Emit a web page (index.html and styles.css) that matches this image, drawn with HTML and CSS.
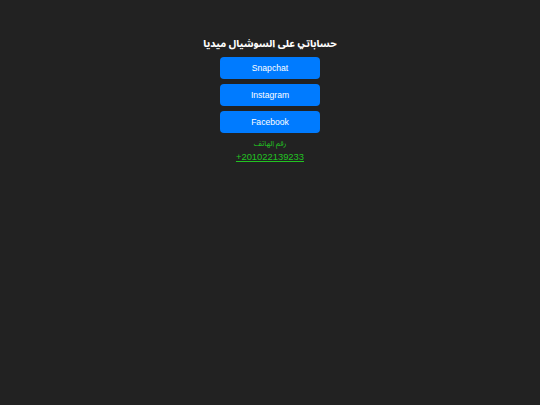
FILE: index.html
```html
<!DOCTYPE html>
<html lang="ar">
<head>
<meta charset="utf-8">
<link rel="stylesheet" href="styles.css">
</head>
<body>
<div class="page">
  <h1 class="title" dir="rtl">حساباتي على السوشيال ميديا</h1>
  <div class="links">
    <a class="btn" href="#">Snapchat</a>
    <a class="btn" href="#">Instagram</a>
    <a class="btn" href="#">Facebook</a>
  </div>
  <div class="phone">
    <div class="phone-label" dir="rtl">رقم الهاتف</div>
    <a class="phone-num" href="#">+201022139233</a>
  </div>
</div>
</body>
</html>
```
FILE: styles.css
```css
html, body {
  margin: 0;
  padding: 0;
  background: #222222;
  height: 100%;
}
body {
  font-family: "Liberation Sans", Arial, "DejaVu Sans", sans-serif;
  color: #ffffff;
}
.page {
  display: flex;
  flex-direction: column;
  align-items: center;
  padding-top: 35px;
}
.title {
  margin: 0;
  font-family: "Noto Sans Arabic UI", "Noto Sans Arabic", "Liberation Sans", sans-serif;
  font-size: 9.9px;
  font-weight: 800;
  line-height: 16px;
  height: 16px;
}
.links {
  display: flex;
  flex-direction: column;
  gap: 5px;
  margin-top: 6px;
}
.btn {
  display: flex;
  align-items: center;
  justify-content: center;
  width: 100px;
  height: 22px;
  background: #007bff;
  color: #ffffff;
  text-decoration: none;
  font-size: 8.6px;
  border-radius: 4px;
}
.phone {
  display: flex;
  flex-direction: column;
  align-items: center;
  gap: 1px;
  margin-top: 6px;
  color: #22c322;
}
.phone-label {
  font-family: "Noto Sans Arabic", "Liberation Sans", sans-serif;
  font-size: 7.6px;
  line-height: 11px;
  height: 11px;
}
.phone-num {
  color: #22c322;
  font-size: 9.4px;
  line-height: 11px;
}
```
